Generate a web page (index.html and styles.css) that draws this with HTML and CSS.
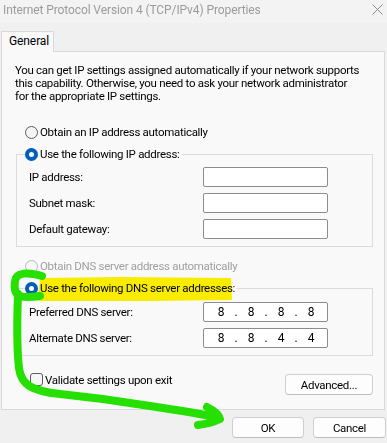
FILE: index.html
```html
<!DOCTYPE html>
<html>
<head>
<meta charset="utf-8">
<link rel="stylesheet" href="styles.css">
</head>
<body>
<div class="titlebar">
  <span class="title">Internet Protocol Version 4 (TCP/IPv4) Properties</span>
  <svg class="close" width="11" height="11" viewBox="0 0 11 11"><path d="M0.5 0.5 L10.5 10.5 M10.5 0.5 L0.5 10.5" stroke="#8c8c8c" stroke-width="1" fill="none"/></svg>
</div>
<div class="tabs"><div class="tab">General</div></div>
<div class="panel">
  <p class="desc">You can get IP settings assigned automatically if your network supports<br>this capability. Otherwise, you need to ask your network administrator<br>for the appropriate IP settings.</p>

  <div class="option option-ip"><span class="radio"></span><span>Obtain an IP address automatically</span></div>
  <fieldset class="group group-ip">
    <legend class="option"><span class="radio checked"></span><span>Use the following IP address:</span></legend>
    <div class="row"><span class="label">IP address:</span><span class="field"></span></div>
    <div class="row"><span class="label">Subnet mask:</span><span class="field"></span></div>
    <div class="row"><span class="label">Default gateway:</span><span class="field"></span></div>
  </fieldset>

  <div class="option option-dns disabled"><span class="radio"></span><span>Obtain DNS server address automatically</span></div>
  <fieldset class="group group-dns">
    <legend class="option"><span class="radio checked"></span><span>Use the following DNS server addresses:</span></legend>
    <div class="row"><span class="label">Preferred DNS server:</span><span class="field ip"><span class="oct">8</span><span class="dot">.</span><span class="oct">8</span><span class="dot">.</span><span class="oct">8</span><span class="dot">.</span><span class="oct">8</span></span></div>
    <div class="row"><span class="label">Alternate DNS server:</span><span class="field ip"><span class="oct">8</span><span class="dot">.</span><span class="oct">8</span><span class="dot">.</span><span class="oct">4</span><span class="dot">.</span><span class="oct">4</span></span></div>
  </fieldset>

  <div class="bottom">
    <div class="check-row"><span class="checkbox"></span><span>Validate settings upon exit</span></div>
    <button class="btn btn-adv">Advanced...</button>
  </div>
</div>
<div class="footer">
  <button class="btn btn-ok">OK</button>
  <button class="btn btn-cancel">Cancel</button>
</div>

<svg class="mark mark-yellow" width="387" height="443" viewBox="0 0 387 443">
  <path d="M40 278 L120 277 L231 278 L232 300 L150 301 L38 301 Z" fill="#fff200"/>
</svg>
<svg class="mark mark-green" width="387" height="443" viewBox="0 0 387 443">
  <path d="M42 276 C28 272 16 272 15 281 C14 288 15 294 20 296 C26 298 34 297 40 296 M18 294 C17 320 17 350 19 368 C21 385 32 391 60 394 C90 397 120 401 150 406 C175 410 200 413 219 418 M207 407 C213 410 219 414 220 419 C214 422 206 424 198 425" fill="none" stroke="#25e000" stroke-width="8" stroke-linecap="round" stroke-linejoin="round"/>
</svg>
</body>
</html>
```

FILE: styles.css
```css
* { box-sizing: border-box; }

body {
  margin: 0;
  width: 387px;
  height: 443px;
  overflow: hidden;
  position: relative;
  background: #f0f0f0;
  font-family: Roboto, "Noto Sans", sans-serif;
  font-size: 11.5px;
  letter-spacing: -0.3px;
  color: #000;
}

.titlebar {
  height: 23px;
  background: #f3f3f3;
  display: flex;
  justify-content: space-between;
  align-items: flex-start;
  padding: 2px 4px 0 3px;
  line-height: 16px;
  font-size: 12px;
  letter-spacing: -0.1px;
  color: #9b9b9b;
}

.close { margin-top: 2px; }

.tabs {
  margin-top: 8px;
  padding-left: 1px;
  display: flex;
}

.tab {
  position: relative;
  z-index: 1;
  width: 53px;
  height: 21px;
  margin-bottom: -1px;
  padding: 1px 0 0 7px;
  line-height: 16px;
  font-size: 12px;
  letter-spacing: -0.1px;
  background: #f9f9f9;
  border: 1px solid #d9d9d9;
  border-bottom: none;
}

.panel {
  margin-left: 1px;
  width: 384px;
  height: 359px;
  background: #f9f9f9;
  border: 1px solid #d9d9d9;
  display: flex;
  flex-direction: column;
}

.desc {
  margin: 12px 0 0 13px;
  line-height: 13px;
  white-space: nowrap;
}

.option {
  display: flex;
  align-items: center;
  gap: 2px;
  height: 16px;
  white-space: nowrap;
}

.option-ip { margin: 21px 0 0 23px; }
.option-dns { margin: 11px 0 0 23px; }

.disabled { color: #a0a0a0; }

.radio {
  width: 13px;
  height: 13px;
  border-radius: 50%;
  border: 1px solid #5c5c5c;
  background: #f4f4f4;
  flex: none;
}

.disabled .radio { border-color: #b8b8b8; background: #f7f7f7; }

.radio.checked {
  border: 4px solid #005fb8;
  background: #fff;
}

.group {
  margin: 6px 0 0 14px;
  width: 357px;
  padding: 0 0 7px 0;
  border: 1px solid #dcdcdc;
  display: flex;
  flex-direction: column;
  gap: 6px;
}

.group legend {
  margin-left: 8px;
  padding: 0 2px 0 0;
}

.group-ip .row:first-of-type { margin-top: 5px; }
.group-dns .row:first-of-type { margin-top: 6px; }

.row {
  display: flex;
  align-items: center;
  height: 20px;
  padding-left: 12px;
}

.label {
  width: 174px;
  flex: none;
}

.field {
  width: 125px;
  height: 20px;
  background: #fff;
  border: 1px solid #8c8c8c;
  border-radius: 2px;
}

.ip {
  display: flex;
  align-items: center;
  padding-left: 2px;
  line-height: 16px;
  font-size: 12px;
  letter-spacing: 0;
}

.oct {
  width: 30px;
  text-align: center;
}

.dot {
  width: 6px;
  margin: 0 -3px;
  text-align: center;
  position: relative;
  z-index: 1;
}

.bottom {
  display: flex;
  justify-content: space-between;
  align-items: flex-start;
  margin: 17px 11px 0 28px;
}

.check-row {
  display: flex;
  align-items: center;
  gap: 2px;
  height: 13px;
}

.checkbox {
  width: 13px;
  height: 13px;
  border: 1px solid #5c5c5c;
  border-radius: 3px;
  background: #f6f6f6;
}

.btn {
  font: inherit;
  letter-spacing: inherit;
  color: #000;
  height: 21px;
  padding: 0;
  background: #fdfdfd;
  border: 1px solid #d0d0d0;
  border-bottom-color: #bdbdbd;
  border-radius: 4px;
}

.btn-adv {
  width: 88px;
  margin-top: 1px;
}

.footer {
  display: flex;
  justify-content: flex-end;
  gap: 9px;
  margin-top: 7px;
  padding-right: 1px;
}

.btn-ok { width: 72px; }
.btn-cancel { width: 73px; }

.mark {
  position: absolute;
  top: 0;
  left: 0;
  pointer-events: none;
}

.mark-yellow { mix-blend-mode: multiply; }
```
